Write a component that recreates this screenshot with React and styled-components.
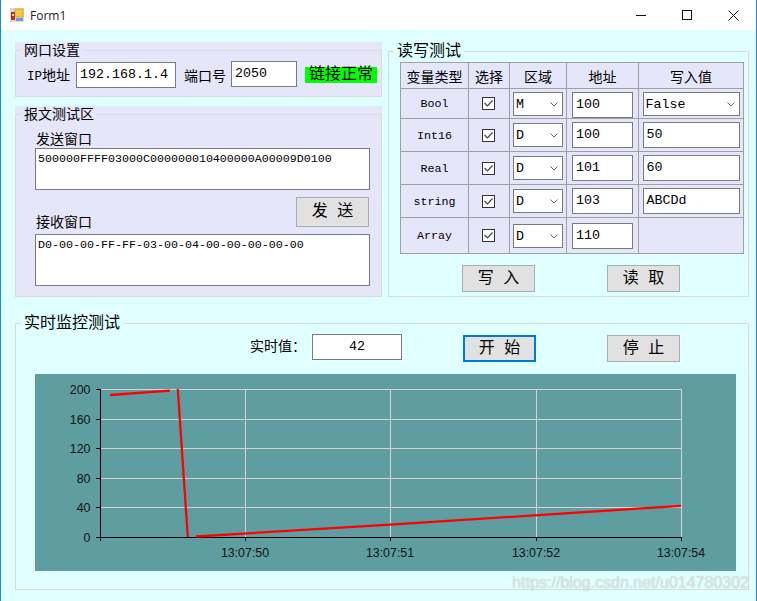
import React from 'react'
import styled, { createGlobalStyle } from 'styled-components'

const GlobalStyle = createGlobalStyle`
  html, body { margin: 0; padding: 0; background: #e0ffff; }
  * { box-sizing: border-box; }
`

const sim = `"Liberation Mono", "Noto Sans CJK SC", monospace`

const Window = styled.div`
  width: 757px;
  height: 601px;
  overflow: hidden;
  position: relative;
  display: flex;
  flex-direction: column;
  background: #e0ffff;
  border-left: 1px solid #1e8ae6;
  border-right: 1px solid #1e8ae6;
  font-family: ${sim};
  color: #000;
`
const TitleBar = styled.div`
  height: 30px;
  flex: none;
  display: flex;
  align-items: center;
  background: #fff;
  padding-left: 9px;
`
const TitleText = styled.span`
  margin-left: 6px;
  flex: 1;
  font: 12px "Open Sans", "Noto Sans", sans-serif;
  color: #222;
`
const WinButton = styled.div`
  width: 46px;
  height: 30px;
  display: flex;
  align-items: center;
  justify-content: center;
`
const Content = styled.div`
  flex: 1;
  padding: 12px 7px 0 14px;
  display: grid;
  grid-template-columns: 367px 361px;
  grid-template-rows: 255px 275px;
  column-gap: 6px;
  row-gap: 18px;
`
const LeftColumn = styled.div`
  display: flex;
  flex-direction: column;
  gap: 9px;
`
const Tint = styled.div`
  background: #e6e6fa;
  height: ${p => p.$h}px;
  display: flex;
`
const Group = styled.fieldset`
  margin: ${p => p.$top || 0}px 0 0;
  padding: 0;
  min-width: 0;
  width: 100%;
  border: 1px solid #d8dcdc;
  display: block;
  grid-column: ${p => (p.$wide ? '1 / span 2' : 'auto')};
`
const Legend = styled.legend`
  margin-left: 5px;
  padding: 0 3px;
  font-size: ${p => p.$size || 14}px;
  line-height: 18px;
  height: 16px;
`
const GroupBody = styled.div`
  padding: ${p => p.$pad};
`
const NetRow = styled.div`
  display: flex;
  align-items: center;
  height: 27px;
`
const Label = styled.span`
  font-size: 12.5px;
  line-height: 16px;
  white-space: nowrap;
  & > b { font-weight: 400; font-size: 14px; }
`
const CjkLabel = styled.span`
  font-size: 14px;
  line-height: 16px;
  white-space: nowrap;
`
const Field = styled.div`
  width: ${p => p.$w}px;
  height: 26px;
  flex: none;
  background: #fff;
  border: 1px solid #7a7a7a;
  font-size: 13.33px;
  line-height: 16px;
  padding: 4px 3px 0;
  text-align: ${p => (p.$center ? 'center' : 'left')};
  white-space: nowrap;
  overflow: hidden;
`
const NetLabel = styled(Label)`
  margin: 4px 6px 0 11px;
`
const PortLabel = styled(CjkLabel)`
  margin: 4px 5px 0 8px;
`
const IpField = styled(Field)`
  align-self: flex-end;
`
const PortField = styled(Field)`
  align-self: flex-start;
`
const Status = styled.div`
  margin-left: 8px;
  width: 72px;
  height: 16px;
  background: #00ff00;
  font-size: 16px;
  line-height: 16px;
  text-align: center;
  white-space: nowrap;
`
const BoxLabel = styled(CjkLabel)`
  display: block;
  padding-left: 1px;
`
const BoxRow = styled.div`
  display: flex;
  align-items: flex-end;
  justify-content: space-between;
  width: 335px;
  height: 44px;
  padding-right: 1px;
  & > span { margin-bottom: 3px; }
  & > button { margin-bottom: 7px; }
`
const Memo = styled.div`
  width: 335px;
  height: ${p => p.$h}px;
  background: #fff;
  border: 1px solid #7a7a7a;
  font-size: 11.67px;
  line-height: 16px;
  padding: 2px 2px 0;
  white-space: nowrap;
  overflow: hidden;
`
const Btn = styled.button`
  width: 73px;
  height: ${p => p.$h || 27}px;
  flex: none;
  padding: 0;
  background: #e1e1e1;
  border: ${p => (p.$focus ? '2px solid #0078d7' : '1px solid #adadad')};
  font-family: ${sim};
  font-size: 16px;
  line-height: 16px;
  color: #000;
  white-space: pre;
`
const Table = styled.div`
  width: 344px;
  display: grid;
  grid-template-columns: 67px 40px 56px 71px 104px;
  grid-template-rows: 25px 29px 32px 32px 32px 35px;
  gap: 1px;
  padding: 1px;
  background: #a0a0a0;
`
const Head = styled.div`
  background: #e6e6fa;
  display: flex;
  align-items: center;
  justify-content: center;
  font-size: 14px;
  white-space: nowrap;
`
const Cell = styled.div`
  background: #e6e6fa;
  display: flex;
  justify-content: center;
  align-items: ${p => (p.$first ? 'flex-start' : 'center')};
  padding-top: ${p => (p.$first ? 3 : 0)}px;
  font-size: 11.67px;
`
const TypeCell = styled(Cell)`
  padding-top: 1px;
`
const CheckCell = styled(Cell)`
  padding-right: 1px;
`
const Check = styled.span`
  width: 13px;
  height: 13px;
  background: #fff;
  border: 1px solid #333;
  display: flex;
  align-items: center;
  justify-content: center;
`
const Select = styled.div`
  width: ${p => p.$w}px;
  height: 24px;
  background: #fff;
  border: 1px solid #7a7a7a;
  display: flex;
  align-items: center;
  justify-content: space-between;
  padding: 1px 4px 0 2px;
  font-size: 13.33px;
`
const Actions = styled.div`
  display: flex;
  padding-left: 62px;
  gap: 72px;
  margin-top: 11px;
`
const ControlRow = styled.div`
  display: flex;
  align-items: flex-start;
  padding-left: 215px;
  height: 40px;
  & > span { margin: 5px 0 0; width: 62px; }
  & > button { margin-top: 1px; }
  & > button:first-of-type { margin-left: 61px; }
  & > button:last-of-type { margin-left: 71px; }
`
const Chart = styled.div`
  width: 701px;
  height: 197px;
  background: #5f9ea0;
  display: flex;
`
const Watermark = styled.div`
  position: absolute;
  right: 7px;
  top: 574px;
  font: 16px "Liberation Sans", sans-serif;
  color: rgba(255, 255, 255, 0.62);
  text-shadow: 0 0 1px rgba(110, 110, 110, 0.55);
  white-space: nowrap;
`

const rows = [
  { type: 'Bool', area: 'M', addr: '100', value: 'False', select: true },
  { type: 'Int16', area: 'D', addr: '100', value: '50' },
  { type: 'Real', area: 'D', addr: '101', value: '60' },
  { type: 'string', area: 'D', addr: '103', value: 'ABCDd' },
  { type: 'Array', area: 'D', addr: '110' },
]

const Chevron = () => (
  <svg width="8" height="5" viewBox="0 0 8 5">
    <path d="M0.5 0.5 L4 4 L7.5 0.5" fill="none" stroke="#666" strokeWidth="1" />
  </svg>
)

const FormIcon = () => (
  <svg width="14" height="14" viewBox="0 0 14 14">
    <rect x="0" y="0" width="14" height="14" fill="#d8d8d8" />
    <rect x="1" y="4" width="4" height="8" fill="#b03020" />
    <rect x="2" y="6" width="2" height="2" fill="#f0d0c0" />
    <rect x="5" y="1" width="8" height="8" fill="#f8c838" stroke="#c89020" strokeWidth="0.6" />
    <rect x="6" y="10" width="7" height="3" fill="#6c9ce0" />
  </svg>
)

const gridX = [245.5, 390.5, 536.5, 681.5]
const yTicks = [
  { y: 389.5, label: '200' },
  { y: 419.5, label: '160' },
  { y: 448.5, label: '120' },
  { y: 478.5, label: '80' },
  { y: 507.5, label: '40' },
  { y: 537.5, label: '0' },
]
const timeLabels = ['13:07:50', '13:07:51', '13:07:52', '13:07:54']

const LineChart = () => (
  <svg width="701" height="197" viewBox="35 374 701 197" fontFamily="Liberation Sans, sans-serif" fontSize="12.4">
    {yTicks.slice(0, 5).map(t => (
      <line key={t.y} x1="100.5" x2="681.5" y1={t.y} y2={t.y} stroke="#d3d3d3" />
    ))}
    {gridX.map(x => (
      <line key={x} x1={x} x2={x} y1="389" y2="537" stroke="#d3d3d3" />
    ))}
    <line x1="100.5" x2="100.5" y1="389" y2="541" stroke="#000" />
    <line x1="96" x2="682" y1="537.5" y2="537.5" stroke="#000" />
    {yTicks.map(t => (
      <g key={t.label}>
        <line x1="96" x2="100" y1={t.y} y2={t.y} stroke="#000" />
        <text x="90.5" y={t.y + 4.5} textAnchor="end" fill="#111">{t.label}</text>
      </g>
    ))}
    {gridX.map((x, i) => (
      <g key={x}>
        <line x1={x} x2={x} y1="537" y2="541" stroke="#000" />
        <text x={x - 0.5} y="557" textAnchor="middle" fill="#111">{timeLabels[i]}</text>
      </g>
    ))}
    <polyline points="110,395 170,390.7" fill="none" stroke="#ff0000" strokeWidth="2.3" />
    <polyline points="177.8,389 187.8,537" fill="none" stroke="#ff0000" strokeWidth="2.3" />
    <polyline points="196,536.5 390,524.7 681,505.8" fill="none" stroke="#ff0000" strokeWidth="2.3" />
  </svg>
)

const App = () => (
  <Window>
    <GlobalStyle />
    <TitleBar>
      <FormIcon />
      <TitleText>Form1</TitleText>
      <WinButton>
        <svg width="10" height="10" viewBox="0 0 10 10"><path d="M0 5.5 H10" stroke="#111" /></svg>
      </WinButton>
      <WinButton>
        <svg width="10" height="10" viewBox="0 0 10 10"><rect x="0.5" y="0.5" width="9" height="9" fill="none" stroke="#111" /></svg>
      </WinButton>
      <WinButton>
        <svg width="11" height="11" viewBox="0 0 11 11"><path d="M0.5 0.5 L10.5 10.5 M10.5 0.5 L0.5 10.5" stroke="#111" /></svg>
      </WinButton>
    </TitleBar>

    <Content>
      <LeftColumn>
        <Tint $h={55}>
          <Group>
            <Legend>网口设置</Legend>
            <GroupBody $pad="3px 0 0">
              <NetRow>
                <NetLabel>IP<b>地址</b></NetLabel>
                <IpField $w={100}>192.168.1.4</IpField>
                <PortLabel>端口号</PortLabel>
                <PortField $w={66}>2050</PortField>
                <Status>链接正常</Status>
              </NetRow>
            </GroupBody>
          </Group>
        </Tint>
        <Tint $h={191}>
          <Group>
            <Legend>报文测试区</Legend>
            <GroupBody $pad="10px 0 0 19px">
              <BoxLabel>发送窗口</BoxLabel>
              <Memo $h={42}>500000FFFF03000C000000010400000A00009D0100</Memo>
              <BoxRow>
                <BoxLabel>接收窗口</BoxLabel>
                <Btn $h={30}>发 送</Btn>
              </BoxRow>
              <Memo $h={52}>D0-00-00-FF-FF-03-00-04-00-00-00-00-00</Memo>
            </GroupBody>
          </Group>
        </Tint>
      </LeftColumn>

      <Group $top={1}>
        <Legend $size={16}>读写测试</Legend>
        <GroupBody $pad="3px 4px 4px 11px">
          <Table>
            <Head>变量类型</Head>
            <Head>选择</Head>
            <Head>区域</Head>
            <Head>地址</Head>
            <Head>写入值</Head>
            {rows.map((r, i) => (
              <React.Fragment key={r.type}>
                <TypeCell>{r.type}</TypeCell>
                <CheckCell>
                  <Check>
                    <svg width="11" height="11" viewBox="0 0 11 11">
                      <path d="M1.5 5 L4.5 8 L9.5 2.5" fill="none" stroke="#444" strokeWidth="1.2" />
                    </svg>
                  </Check>
                </CheckCell>
                <Cell $first={i === 0}>
                  <Select $w={50}>{r.area}<Chevron /></Select>
                </Cell>
                <Cell $first={i === 0}>
                  <Field $w={61}>{r.addr}</Field>
                </Cell>
                <Cell $first={i === 0}>
                  {r.select && <Select $w={97}>{r.value}<Chevron /></Select>}
                  {!r.select && r.value && <Field $w={97}>{r.value}</Field>}
                </Cell>
              </React.Fragment>
            ))}
          </Table>
          <Actions>
            <Btn>写 入</Btn>
            <Btn>读 取</Btn>
          </Actions>
        </GroupBody>
      </Group>

      <Group $wide>
        <Legend $size={16}>实时监控测试</Legend>
        <GroupBody $pad="3px 0 0 19px">
          <ControlRow>
            <CjkLabel>实时值：</CjkLabel>
            <Field $w={90} $center>42</Field>
            <Btn $focus>开 始</Btn>
            <Btn>停 止</Btn>
          </ControlRow>
          <Chart>
            <LineChart />
          </Chart>
        </GroupBody>
      </Group>
    </Content>
    <Watermark>https://blog.csdn.net/u014780302</Watermark>
  </Window>
)

export default App
